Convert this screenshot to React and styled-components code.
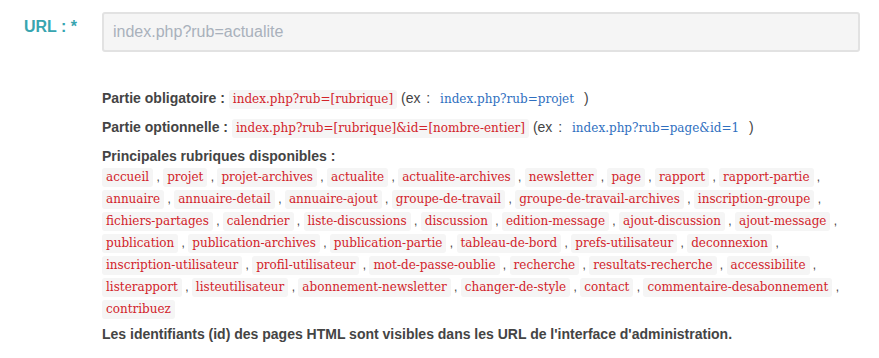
import React from "react";
import styled, { createGlobalStyle } from "styled-components";

const GlobalStyle = createGlobalStyle`
  body {
    margin: 0;
    background: #fff;
    font-family: "Liberation Sans", Arial, sans-serif;
    color: #444;
  }
`;

const Form = styled.div`
  display: grid;
  grid-template-columns: 102px 758px;
  padding-top: 12px;
`;

const Label = styled.label`
  padding: 6px 0 0 24px;
  font-size: 16px;
  font-weight: bold;
  color: #38a5b0;
`;

const Input = styled.input`
  box-sizing: border-box;
  width: 100%;
  height: 40px;
  padding: 0 9px;
  background: #f5f5f5;
  border: 2px solid #e2e2e2;
  border-radius: 3px;
  font-family: "Liberation Sans", Arial, sans-serif;
  font-size: 16px;
  color: #555;
  &::placeholder {
    color: #a9b1bc;
  }
`;

const Help = styled.div`
  grid-column: 2;
  padding-top: 35px;
  font-size: 14px;
  line-height: 22px;
`;

const Line = styled.p`
  margin: 0 0 ${props => props.gap ?? 7}px;
`;

const Strong = styled.strong`
  color: #444;
`;

const Code = styled.code`
  font-family: "DejaVu Serif", serif;
  font-size: 12px;
  line-height: 1;
  white-space: nowrap;
  padding: 2px 4px 3px;
  border-radius: 3px;
  color: ${props => (props.example ? "#2f6fc0" : "#d2232a")};
  background: ${props => (props.example ? "transparent" : "#f5f5f5")};
`;

const Sep = styled.span`
  font-size: 12px;
  line-height: 1;
  color: #444;
`;

const Paren = styled.span`
  font-weight: normal;
  color: #444;
  word-spacing: 2px;
`;

const Rubriques = styled.div`
  margin-bottom: 4px;
`;

const rubriques = [
  "accueil", "projet", "projet-archives", "actualite", "actualite-archives",
  "newsletter", "page", "rapport", "rapport-partie", "annuaire",
  "annuaire-detail", "annuaire-ajout", "groupe-de-travail",
  "groupe-de-travail-archives", "inscription-groupe", "fichiers-partages",
  "calendrier", "liste-discussions", "discussion", "edition-message",
  "ajout-discussion", "ajout-message", "publication", "publication-archives",
  "publication-partie", "tableau-de-bord", "prefs-utilisateur", "deconnexion",
  "inscription-utilisateur", "profil-utilisateur", "mot-de-passe-oublie",
  "recherche", "resultats-recherche", "accessibilite", "listerapport",
  "listeutilisateur", "abonnement-newsletter", "changer-de-style", "contact",
  "commentaire-desabonnement", "contribuez",
];

export default function App() {
  return (
    <>
      <GlobalStyle />
      <Form>
        <Label>URL : *</Label>
        <Input placeholder="index.php?rub=actualite" />
        <Help>
          <Line>
            <Strong>Partie obligatoire :</Strong> <Code>index.php?rub=[rubrique]</Code>{" "}
            <Paren>(ex : <Code example>index.php?rub=projet</Code> )</Paren>
          </Line>
          <Line>
            <Strong>Partie optionnelle :</Strong>{" "}
            <Code>index.php?rub=[rubrique]&amp;id=[nombre-entier]</Code>{" "}
            <Paren>(ex : <Code example>index.php?rub=page&amp;id=1</Code> )</Paren>
          </Line>
          <Line gap={-2}>
            <Strong>Principales rubriques disponibles :</Strong>
          </Line>
          <Rubriques>
            {rubriques.map((r, i) => (
              <React.Fragment key={r}>
                <Code>{r}</Code>
                {i < rubriques.length - 1 && <Sep> , </Sep>}
              </React.Fragment>
            ))}
          </Rubriques>
          <Line>
            <Strong>Les identifiants (id) des pages HTML sont visibles dans les URL de l'interface d'administration.</Strong>
          </Line>
        </Help>
      </Form>
    </>
  );
}
